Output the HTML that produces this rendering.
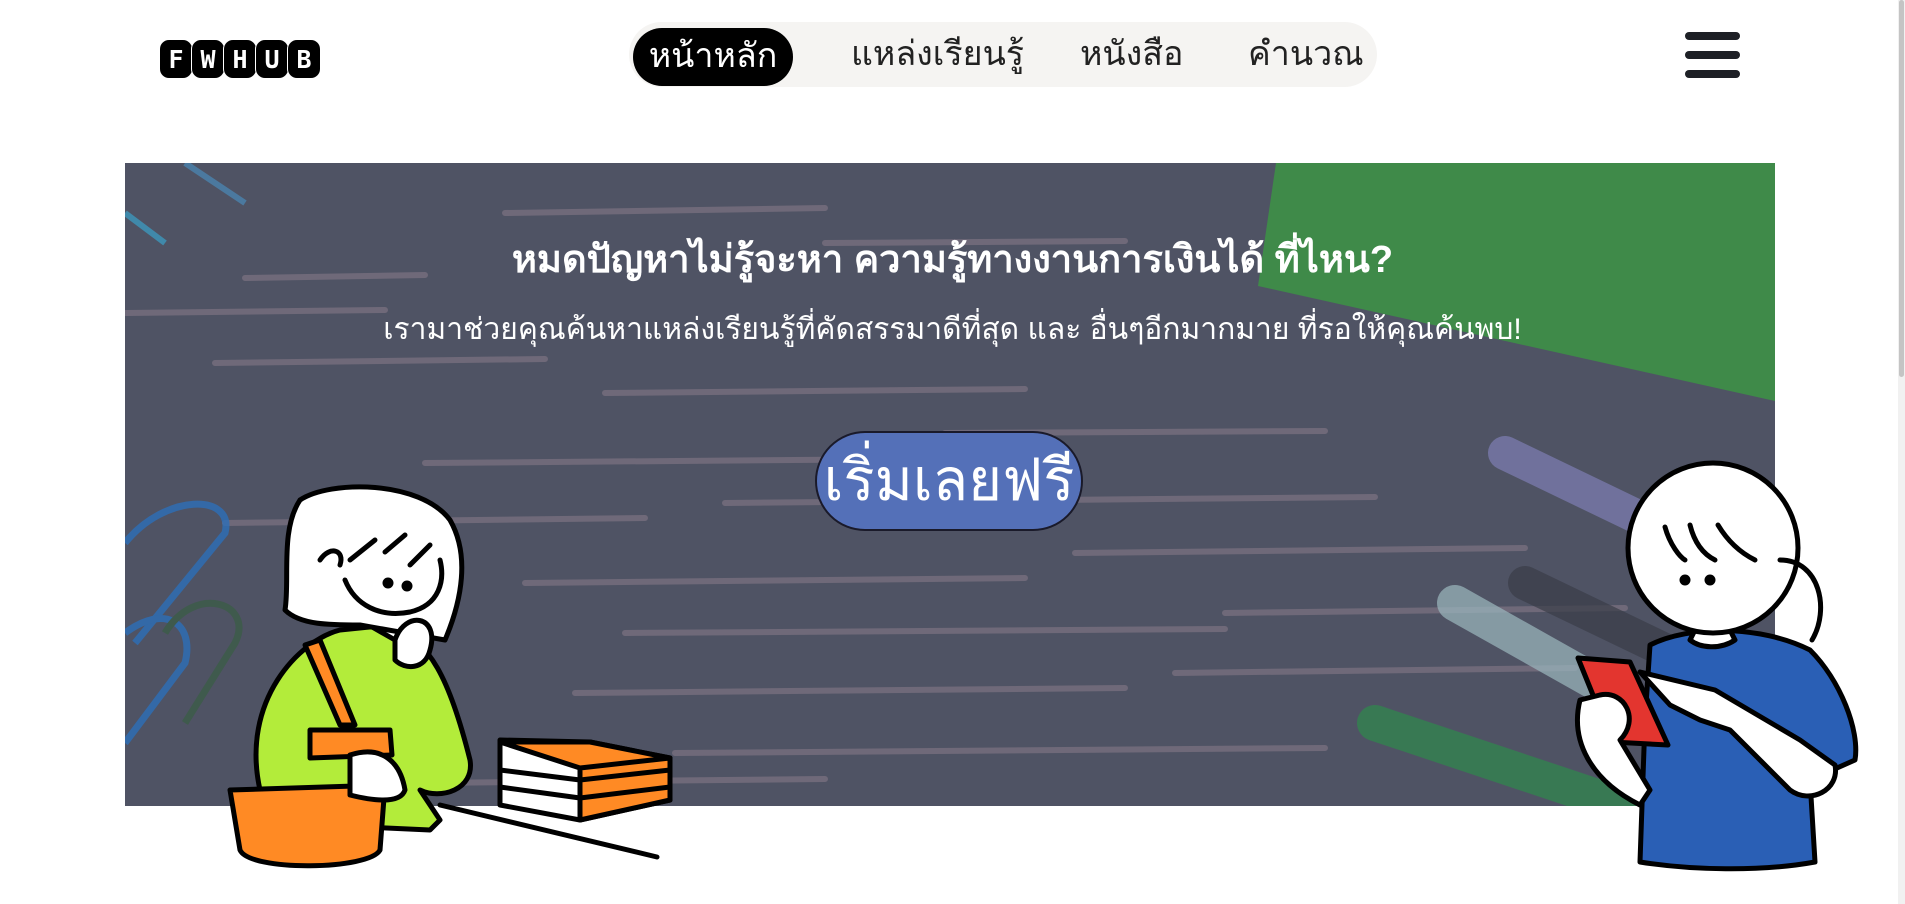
<!DOCTYPE html>
<html><head><meta charset="utf-8"><style>
html,body{margin:0;padding:0;}
body{width:1905px;height:904px;overflow:hidden;background:#fff;position:relative;font-family:"Liberation Sans","Noto Sans CJK SC",sans-serif;}
.logo{position:absolute;left:159px;top:39px;display:flex;}
.logo span{width:32px;height:38px;background:#000;border-radius:10px;color:#fff;font:bold 25px "DejaVu Sans Mono",monospace;display:flex;align-items:center;justify-content:center;margin-right:-2px;border:1.5px solid #fff;}
.nav{position:absolute;left:629px;top:22px;width:748px;height:65px;background:#f5f4f2;border-radius:33px;}
.nav a{position:absolute;top:6px;font-size:34px;color:#222;line-height:52px;text-decoration:none;white-space:nowrap;}
.nav a.act{left:4px;top:6px;width:160px;height:58px;background:#000;color:#fff;border-radius:29px;text-align:center;line-height:56px;}
.ham{position:absolute;left:1685px;width:55px;height:8px;background:#1e2026;border-radius:4px;}
.sb{position:absolute;left:1898px;top:0;width:7px;height:904px;background:#f1f1f1;}
.sb div{position:absolute;left:1px;top:0;width:5px;height:377px;background:#c4c4c4;border-radius:3px;}
.hero{position:absolute;left:125px;top:163px;width:1650px;height:643px;background:#4f5364;overflow:hidden;}
.h1{position:absolute;left:0;width:1905px;top:228px;text-align:center;color:#fff;font-size:38px;font-weight:bold;}
.h2{position:absolute;left:0;width:1905px;top:306px;text-align:center;color:#fff;font-size:30px;}
.btn{position:absolute;left:815px;top:431px;width:268px;height:100px;background:#5470b8;border:2px solid #1a1a2a;border-radius:50px;color:#fff;font-size:58px;text-align:center;line-height:96px;box-sizing:border-box;white-space:nowrap;}
</style></head><body>
<div class="logo"><span>F</span><span>W</span><span>H</span><span>U</span><span>B</span></div>
<div class="nav">
<a class="act">หน้าหลัก</a>
<a style="left:222px">แหล่งเรียนรู้</a>
<a style="left:451px">หนังสือ</a>
<a style="left:619px">คำนวณ</a>
</div>
<div class="ham" style="top:32px"></div>
<div class="ham" style="top:51px"></div>
<div class="ham" style="top:70px"></div>
<div class="sb"><div></div></div>

<div class="hero">
<svg width="1650" height="643" style="position:absolute;left:0;top:0">
<g stroke="#857887" stroke-width="6" stroke-linecap="round" opacity=".6">
<line x1="120" y1="115" x2="300" y2="112"/><line x1="0" y1="150" x2="260" y2="147"/>
<line x1="380" y1="50" x2="700" y2="45"/><line x1="700" y1="80" x2="1000" y2="78"/>
<line x1="90" y1="200" x2="420" y2="196"/><line x1="480" y1="230" x2="900" y2="226"/>
<line x1="300" y1="300" x2="800" y2="296"/><line x1="820" y1="270" x2="1200" y2="268"/>
<line x1="100" y1="360" x2="520" y2="355"/><line x1="600" y1="340" x2="1250" y2="334"/>
<line x1="400" y1="420" x2="900" y2="415"/><line x1="950" y1="390" x2="1400" y2="385"/>
<line x1="500" y1="470" x2="1100" y2="466"/><line x1="1100" y1="450" x2="1500" y2="445"/>
<line x1="450" y1="530" x2="1000" y2="525"/><line x1="1050" y1="510" x2="1450" y2="505"/>
<line x1="550" y1="590" x2="1200" y2="585"/><line x1="300" y1="620" x2="700" y2="616"/>
</g>
<polygon points="1151,0 1650,0 1650,238 1133,123" fill="#3f8a49"/>
<g stroke-linecap="round" opacity=".7">
<line x1="1380" y1="290" x2="1650" y2="420" stroke="#7f7fb5" stroke-width="34"/>
<line x1="1400" y1="420" x2="1650" y2="540" stroke="#3a3d48" stroke-width="34"/>
<line x1="1330" y1="440" x2="1650" y2="620" stroke="#9cb8bf" stroke-width="36"/>
<line x1="1250" y1="560" x2="1550" y2="660" stroke="#2f8a4c" stroke-width="36"/>
</g>
<g fill="none" stroke="#2d6fb8" stroke-width="7" opacity=".8">
<path d="M0,380 C40,330 110,330 100,370 L10,480"/>
<path d="M0,470 C40,440 70,460 60,500 L0,580"/>
</g>
<g fill="none" stroke="#3f5a4d" stroke-width="7"><path d="M40,470 C70,420 130,440 110,480 L60,560"/></g>
<line x1="60" y1="0" x2="120" y2="40" stroke="#4a8ab8" stroke-width="6" opacity=".7"/>
<line x1="0" y1="50" x2="40" y2="80" stroke="#3aa0c8" stroke-width="6" opacity=".7"/>
</svg>
</div>
<div class="h1">หมดปัญหาไม่รู้จะหา ความรู้ทางงานการเงินได้ ที่ไหน?</div>
<div class="h2">เรามาช่วยคุณค้นหาแหล่งเรียนรู้ที่คัดสรรมาดีที่สุด และ อื่นๆอีกมากมาย ที่รอให้คุณค้นพบ!</div>
<div class="btn">เริ่มเลยฟรี</div>

<svg width="1905" height="904" style="position:absolute;left:0;top:0" stroke="#000" stroke-width="5" stroke-linejoin="round" stroke-linecap="round">
<line x1="440" y1="805" x2="657" y2="857"/>
<path d="M260,790 C240,700 300,640 340,630 L390,625 C430,640 450,680 470,760 C475,790 440,800 420,790 L440,820 L430,830 L320,825 Z" fill="#b3ec3a"/>
<path d="M360,620 L395,640 L420,625 L415,605 L370,605 Z" fill="#fff"/>
<path d="M300,500 C330,480 420,480 450,520 C470,555 462,600 445,640 L360,625 C330,625 300,625 285,610 C290,580 280,530 300,500 Z" fill="#fff"/>
<path d="M345,580 C355,605 380,618 410,612 C440,605 445,580 440,560" fill="none"/>
<path d="M320,560 C330,545 345,550 340,565" fill="none"/>
<path d="M350,560 L375,540 M385,552 L405,535 M410,565 L430,545" fill="none"/>
<circle cx="388" cy="583" r="3" fill="#000"/><circle cx="407" cy="586" r="3" fill="#000"/>
<path d="M395,640 C405,610 440,615 430,650 C425,670 405,670 395,660 Z" fill="#fff"/>
<path d="M305,645 L340,725 L355,725 L320,640 Z" fill="#ff8a24"/>
<path d="M230,790 L385,785 L380,850 C370,870 250,872 240,850 Z" fill="#ff8a24"/>
<path d="M310,730 L390,730 L392,755 L310,758 Z" fill="#ff8a24"/>
<path d="M350,755 C380,745 400,760 405,790 C400,805 370,800 350,795 Z" fill="#fff"/>
<path d="M500,740 L590,742 L670,758 L670,800 L580,820 L500,805 Z" fill="#fff"/>
<path d="M500,742 L590,742 L670,758 L580,768 Z M580,768 L670,758 L670,800 L580,820 Z" fill="#ff8a24"/>
<path d="M500,770 L580,780 L670,770 M500,787 L580,798 L670,787" fill="none"/>
<path d="M1650,645 C1690,625 1760,625 1810,650 C1840,680 1860,730 1855,760 L1810,780 L1815,862 C1760,872 1690,870 1640,862 L1645,720 Z" fill="#2a5fb5"/>
<path d="M1700,620 L1725,620 L1735,640 C1720,650 1700,648 1690,640 Z" fill="#fff"/>
<circle cx="1713" cy="548" r="85" fill="#fff"/>
<path d="M1780,560 C1820,560 1830,610 1812,640" fill="none"/>
<path d="M1665,527 C1670,545 1680,557 1685,560 M1690,525 C1695,545 1705,555 1715,560 M1718,525 C1730,545 1745,555 1755,560" fill="none"/>
<circle cx="1685" cy="580" r="3" fill="#000"/><circle cx="1710" cy="580" r="3" fill="#000"/>
<path d="M1578,658 L1630,662 L1668,745 L1612,742 Z" fill="#e3352f"/>
<path d="M1580,700 C1570,740 1590,780 1640,805 L1650,790 L1620,740 C1640,720 1625,690 1600,695 Z" fill="#fff"/>
<path d="M1640,672 L1715,690 L1800,740 L1835,765 C1840,790 1810,805 1790,790 L1730,730 L1700,720 L1670,705 Z" fill="#fff"/>
</svg>
</body></html>
